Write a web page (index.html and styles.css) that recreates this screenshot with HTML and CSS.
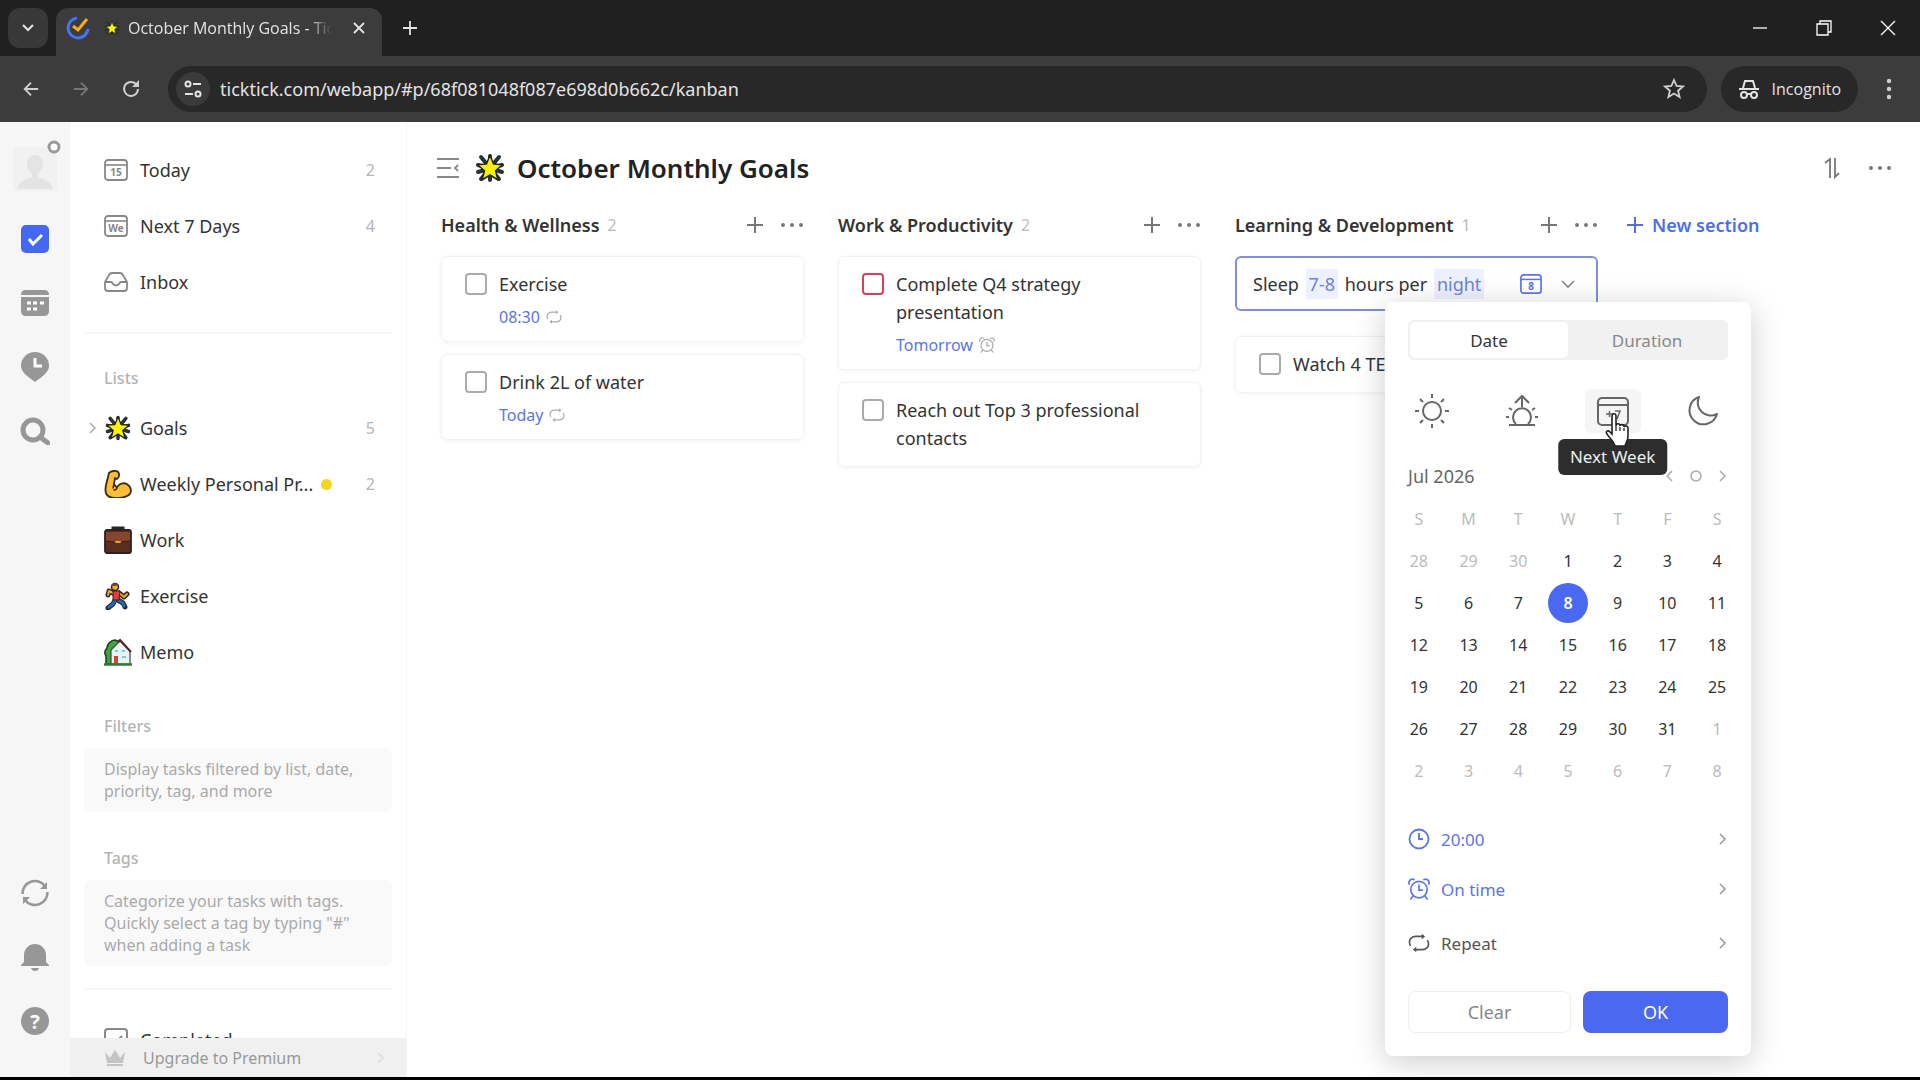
FILE: index.html
```html
<!DOCTYPE html>
<html lang="en">
<head>
    <meta charset="UTF-8">
    <meta name="viewport" content="width=device-width, initial-scale=1.0">
    <title>October Monthly Goals - TickTick</title>
    <link rel="stylesheet" href="styles.css">
</head>
<body>
    <!-- shared icons -->
    <svg class="sprite" aria-hidden="true">
        <symbol id="i-star" viewBox="0 0 32 32">
            <g stroke="#263238" stroke-width="4" stroke-linecap="round">
                <path d="M16 4v24M4 13l24 7M28 13L4 20M7 5l18 22M25 5L7 27"/>
            </g>
            <path d="M16 3l3.500 9 9 .8-7 6 2.500 9.200-8-5-8 5 2.500-9.200-7-6 9-.8z" fill="#fbf20c" stroke="#22261c" stroke-width="1.500" stroke-linejoin="round"/>
        </symbol>
        <symbol id="i-arm" viewBox="0 0 28 28">
            <path d="M5 3C7 1 12 0 14 2c2 2 1 6-1 7l-2-1-1 6c1 2 2 3 3 3 3-4 8-5 11-2 4 3 4 9-1 11-6 3-15 3-19 0-3-2-3-6-2-11C3 11 4 7 5 3z" fill="#fbbe38" stroke="#3b2c14" stroke-width="1.800" stroke-linejoin="round"/>
            <path d="M10 14l-1 4M13 17c0 2-1 3-3 3" fill="none" stroke="#3b2c14" stroke-width="1.500" stroke-linecap="round"/>
        </symbol>
        <symbol id="i-case" viewBox="0 0 28 28">
            <path d="M9 5V2h10v3" fill="none" stroke="#2b2226" stroke-width="3"/>
            <rect x="1" y="4" width="26" height="23" rx="2" fill="#5a2d20" stroke="#2b2226" stroke-width="1.800"/>
            <path d="M2 6h24v9l-12 1.500L2 15z" fill="#85462c"/>
            <path d="M2 15l12 1.500L26 15" fill="none" stroke="#3a1d16"/>
            <rect x="11" y="15" width="6" height="2" rx="1" fill="#e0a43a"/>
        </symbol>
        <symbol id="i-run" viewBox="0 0 28 28">
            <g fill="none" stroke-linecap="round" stroke-linejoin="round">
                <path d="M11 12L5 9 4 13M15 11l5 4 3-3M11 18l-2 4-5 4M14 18l5 3 2 4" stroke="#2d2722" stroke-width="5"/>
                <path d="M11 12L5 9 4 13M15 11l5 4 3-3" stroke="#f0a92e" stroke-width="2"/>
                <path d="M11 18l-2 4-4 3M14 18l5 3 1 3" stroke="#2368b5" stroke-width="3"/>
            </g>
            <path d="M9 9h7l-1 9H9z" fill="#e43d35" stroke="#2d2722"/>
            <circle cx="11" cy="5" r="3.500" fill="#f0a92e" stroke="#2d2722" stroke-width="1.500"/>
            <path d="M7 4c0-3 6-4 8-1l-5 1z" fill="#6a4322"/>
        </symbol>
        <symbol id="i-home" viewBox="0 0 28 28">
            <path d="M2 26V18c-2-3-1-6 1-8 0-4 4-8 8-8l5 2v22z" fill="#3da53c" stroke="#1c3a1f" stroke-width="1.500"/>
            <path d="M7 26V12l9-9 10 10v13z" fill="#e8f5f8" stroke="#444" stroke-width="1.200"/>
            <path d="M14 4l2-2 11 12" fill="none" stroke="#5c1e2a" stroke-width="2"/>
            <rect x="10" y="18" width="4" height="8" fill="#d5403a"/>
            <path d="M11 13h3M18 13h3M18 19h4" stroke="#79cbe4" stroke-width="2"/>
            <path d="M0 26.500h28" stroke="#2d7d32" stroke-width="2.500"/>
        </symbol>
        <symbol id="i-repeat" viewBox="0 0 20 20">
            <path d="M2 12C0 7 3 4 7 4h7M18 8c2 5-1 8-5 8H6" fill="none" stroke="currentColor" stroke-width="1.500" stroke-linecap="round"/>
            <path d="M12.500 1.500L15.500 4l-3 2.500zM7.500 13.500L4.500 16l3 2.500z" fill="currentColor"/>
        </symbol>
        <symbol id="i-alarm" viewBox="0 0 20 20">
            <g fill="none" stroke="currentColor" stroke-width="1.500" stroke-linecap="round">
                <circle cx="10" cy="10.500" r="7.500"/>
                <path d="M10 6.500V11h3M4.500 16.500L2.500 19M15.500 16.500l2 2.500M1 5.500C0 3 3 0 5.500 1.500M19 5.500C20 3 17 0 14.500 1.500"/>
            </g>
        </symbol>
        <symbol id="i-plus" viewBox="0 0 18 18">
            <path d="M9 1v16M1 9h16" stroke="currentColor" stroke-width="2" fill="none"/>
        </symbol>
        <symbol id="i-dots" viewBox="0 0 22 6">
            <g fill="currentColor"><circle cx="2" cy="3" r="2"/><circle cx="11" cy="3" r="2"/><circle cx="20" cy="3" r="2"/></g>
        </symbol>
        <symbol id="i-right" viewBox="0 0 10 14">
            <path d="M2 2l5 5-5 5" stroke="currentColor" stroke-width="1.500" fill="none"/>
        </symbol>
        <symbol id="i-cal" viewBox="0 0 24 24">
            <rect x="1" y="2" width="22" height="20" rx="3" fill="none" stroke="currentColor" stroke-width="1.800"/>
            <path d="M1 7h22" stroke="currentColor" stroke-width="1.600"/>
        </symbol>
    </svg>

    <header class="browser">
        <div class="tab_strip">
            <button class="tab_search" aria-label="Search tabs">
                <svg width="12" height="8" viewBox="0 0 12 8"><path d="M1 1l5 5 5-5" fill="none" stroke="#e3e3e3" stroke-width="2"/></svg>
            </button>
            <div class="tab">
                <svg class="favicon" width="24" height="24" viewBox="0 0 24 24">
                    <path d="M11 2A10 10 0 1 0 22 13" fill="none" stroke="#4772fa" stroke-width="3"/>
                    <path d="M7 10l5 4L21 3" fill="none" stroke="#f3ad27" stroke-width="3"/>
                </svg>
                <svg width="16" height="16"><use href="#i-star"/></svg>
                <span class="tab_title">October Monthly Goals - TickTick</span>
                <button class="tab_close" aria-label="Close tab">
                    <svg width="12" height="12" viewBox="0 0 12 12"><path d="M1 1l10 10M11 1L1 11" stroke="#e3e3e3" stroke-width="1.800"/></svg>
                </button>
            </div>
            <button class="tab_new" aria-label="New tab">
                <svg width="14" height="14" viewBox="0 0 14 14"><path d="M7 0v14M0 7h14" stroke="#e3e3e3" stroke-width="1.800"/></svg>
            </button>
            <div class="window_controls">
                <button aria-label="Minimize"><svg width="16" height="16" viewBox="0 0 16 16"><path d="M1 8h14" stroke="#fff" stroke-width="1.300"/></svg></button>
                <button aria-label="Restore"><svg width="16" height="16" viewBox="0 0 16 16"><path d="M1 4h11v11H1zM4 4V1h11v11h-3" stroke="#fff" stroke-width="1.300" fill="none"/></svg></button>
                <button aria-label="Close"><svg width="16" height="16" viewBox="0 0 16 16"><path d="M1 1l14 14M15 1L1 15" stroke="#fff" stroke-width="1.300"/></svg></button>
            </div>
        </div>
        <div class="toolbar">
            <nav class="nav_buttons">
                <button aria-label="Back"><svg width="18" height="18" viewBox="0 0 20 20"><path d="M18 10H3M10 3l-7 7 7 7" stroke="#d0d0d0" stroke-width="2" fill="none"/></svg></button>
                <button aria-label="Forward"><svg width="18" height="18" viewBox="0 0 20 20"><path d="M2 10h15M10 3l7 7-7 7" stroke="#777" stroke-width="2" fill="none"/></svg></button>
                <button aria-label="Reload"><svg width="20" height="20" viewBox="0 0 20 20"><path d="M17 10a7 7 0 1 1-2-5l2 2" stroke="#d0d0d0" stroke-width="2" fill="none"/><path d="M18 1v7h-7z" fill="#d0d0d0"/></svg></button>
            </nav>
            <div class="address">
                <button class="site_info" aria-label="Site information">
                    <svg width="18" height="18" viewBox="0 0 18 18" fill="none" stroke="#e3e3e3" stroke-width="2"><circle cx="4" cy="4" r="2.500"/><path d="M9 4h8M1 14h8"/><circle cx="14" cy="14" r="2.500"/></svg>
                </button>
                <input class="url" type="text" aria-label="Address" value="ticktick.com/webapp/#p/68f081048f087e698d0b662c/kanban">
                <button aria-label="Bookmark">
                    <svg width="22" height="22" viewBox="0 0 22 22"><path d="M11 2l2.600 6 6.400.5-4.900 4.200 1.500 6.300-5.600-3.400L5.400 19l1.500-6.300L2 8.500 8.400 8z" fill="none" stroke="#d0d0d0" stroke-width="1.800"/></svg>
                </button>
            </div>
            <div class="incognito">
                <svg width="22" height="20" viewBox="0 0 22 20" fill="none" stroke="#e3e3e3" stroke-width="2"><path d="M1 10h20M5 9l2-7h8l2 7"/><circle cx="6" cy="16" r="3"/><circle cx="16" cy="16" r="3"/><path d="M9 15h4"/></svg>
                <span>Incognito</span>
            </div>
            <button class="browser_menu" aria-label="Menu">
                <svg width="6" height="22" viewBox="0 0 6 22" fill="#d0d0d0"><circle cx="3" cy="3" r="2.200"/><circle cx="3" cy="11" r="2.200"/><circle cx="3" cy="19" r="2.200"/></svg>
            </button>
        </div>
    </header>

    <div class="app">
        <nav class="rail">
            <div class="avatar">
                <svg width="44" height="44" viewBox="0 0 44 44"><rect width="44" height="44" rx="4" fill="#f1f1f1"/><path d="M14 16a8 8 0 0 1 16 0c0 5-3 9-5 11v3c5 2 13 4 15 12H4c2-8 10-10 15-12v-3c-2-2-5-6-5-11z" fill="#e4e4e4"/></svg>
                <svg class="avatar_badge" width="14" height="14" viewBox="0 0 14 14"><circle cx="7" cy="7" r="5" fill="#fff" stroke="#999" stroke-width="3"/></svg>
            </div>
            <button aria-label="Tasks"><svg width="28" height="28" viewBox="0 0 28 28"><rect width="28" height="28" rx="5" fill="#4468f0"/><path d="M8 14l4 5 9-9" fill="none" stroke="#fff" stroke-width="3"/></svg></button>
            <button aria-label="Calendar"><svg width="28" height="28" viewBox="0 0 28 28"><path d="M0 6q0-5 5-5h18q5 0 5 5z" fill="#979797"/><path d="M0 8h28v14q0 5-5 5H5q-5 0-5-5z" fill="#979797"/><path d="M6 14h4M12 14h4M19 14h4M6 20h4M12 20h4" stroke="#fff" stroke-width="3"/></svg></button>
            <button aria-label="Focus"><svg width="28" height="30" viewBox="0 0 28 30"><path d="M14 0a14 14 0 0 1 14 14c0 6-7 11-14 16C7 25 0 20 0 14A14 14 0 0 1 14 0z" fill="#979797"/><path d="M14 6v8h7" fill="none" stroke="#fff" stroke-width="3"/></svg></button>
            <button aria-label="Search"><svg width="30" height="28" viewBox="0 0 30 28" fill="none" stroke="#979797"><circle cx="13" cy="13" r="10" stroke-width="5"/><path d="M20 20l8 6" stroke-width="5" stroke-linecap="round"/></svg></button>
            <div class="rail_gap"></div>
            <button aria-label="Sync"><svg width="28" height="28" viewBox="0 0 28 28"><path d="M1.500 15A12.500 12.500 0 0 1 24 7M26.500 13A12.500 12.500 0 0 1 4 21" fill="none" stroke="#979797" stroke-width="2.500"/><path d="M26 3v7h-7zM2 25v-7h7z" fill="#979797"/></svg></button>
            <button aria-label="Notifications"><svg width="28" height="28" viewBox="0 0 28 28" fill="#979797"><path d="M3 19V12a11 11 0 0 1 22 0v7l3 3v1H0v-1z"/><path d="M10 25h8c-1 4-7 4-8 0z"/></svg></button>
            <button class="help" aria-label="Help">?</button>
        </nav>

        <aside class="sidebar">
            <div class="side_scroll">
                <ul class="side_list">
                    <li><span class="side_icon"><svg width="24" height="24"><use href="#i-cal"/></svg><small>15</small></span><a href="#today">Today</a><b>2</b></li>
                    <li><span class="side_icon"><svg width="24" height="24"><use href="#i-cal"/></svg><small>We</small></span><a href="#week">Next 7 Days</a><b>4</b></li>
                    <li><span class="side_icon"><svg width="24" height="24" viewBox="0 0 24 24" fill="none" stroke="currentColor" stroke-width="1.800"><path d="M1 12l4-7q1-2 3-2h8q2 0 3 2l4 7v6q0 3-3 3H4q-3 0-3-3zM1 12h6q1 0 2 2 3 3 6 0 1-2 2-2h6"/></svg></span><a href="#inbox">Inbox</a></li>
                </ul>
                <hr>
                <h2>Lists</h2>
                <ul class="side_list">
                    <li><svg class="side_arrow" width="10" height="14"><use href="#i-right"/></svg><svg class="emoji" width="28" height="28"><use href="#i-star"/></svg><a href="#goals">Goals</a><b>5</b></li>
                    <li><svg class="emoji" width="28" height="28"><use href="#i-arm"/></svg><a href="#weekly">Weekly Personal Pr...</a><i class="dot"></i><b>2</b></li>
                    <li><svg class="emoji" width="28" height="28"><use href="#i-case"/></svg><a href="#work">Work</a></li>
                    <li><svg class="emoji" width="28" height="28"><use href="#i-run"/></svg><a href="#exercise">Exercise</a></li>
                    <li><svg class="emoji" width="28" height="28"><use href="#i-home"/></svg><a href="#memo">Memo</a></li>
                </ul>
                <h2 class="spaced">Filters</h2>
                <p class="hint">Display tasks filtered by list, date,<br>priority, tag, and more</p>
                <h2 class="spaced">Tags</h2>
                <p class="hint">Categorize your tasks with tags.<br>Quickly select a tag by typing "#"<br>when adding a task</p>
                <hr>
                <ul class="side_list">
                    <li><span class="side_icon"><svg width="24" height="24" viewBox="0 0 24 24" fill="none" stroke="currentColor" stroke-width="2"><rect x="1" y="1" width="22" height="22" rx="3"/><path d="M6 12l4 4 8-8"/></svg></span><a href="#completed">Completed</a></li>
                </ul>
            </div>
            <button class="upgrade">
                <svg width="22" height="18" viewBox="0 0 22 18"><path d="M1 3l5 6 5-8 5 8 5-6-2 11H3zM3 15h16v2H3z" fill="#c4c4c4"/></svg>
                <span>Upgrade to Premium</span>
                <svg class="upgrade_arrow" width="10" height="14"><use href="#i-right"/></svg>
            </button>
        </aside>

        <main class="board">
            <div class="board_head">
                <button aria-label="Hide sidebar"><svg width="22" height="22" viewBox="0 0 22 22" fill="none" stroke="#888" stroke-width="1.800"><path d="M0 2h22M0 11h14M0 20h22M21 8l-3 3 3 3"/></svg></button>
                <svg width="32" height="32"><use href="#i-star"/></svg>
                <h1>October Monthly Goals</h1>
                <button class="sort" aria-label="Sort"><svg width="16" height="22" viewBox="0 0 16 22" fill="none" stroke="#777" stroke-width="1.800"><path d="M1 6l5-4v19M15 16l-4 4V1"/></svg></button>
                <button aria-label="More"><svg width="22" height="6"><use href="#i-dots"/></svg></button>
            </div>
            <div class="columns">
                <section class="column">
                    <div class="column_head">
                        <h3>Health &amp; Wellness</h3><span>2</span>
                        <button aria-label="Add task"><svg width="18" height="18"><use href="#i-plus"/></svg></button>
                        <button aria-label="Section menu"><svg width="22" height="6"><use href="#i-dots"/></svg></button>
                    </div>
                    <article class="card">
                        <input type="checkbox" id="t1">
                        <div><label for="t1">Exercise</label><p>08:30 <svg width="16" height="16"><use href="#i-repeat"/></svg></p></div>
                    </article>
                    <article class="card">
                        <input type="checkbox" id="t2">
                        <div><label for="t2">Drink 2L of water</label><p>Today <svg width="16" height="16"><use href="#i-repeat"/></svg></p></div>
                    </article>
                </section>
                <section class="column">
                    <div class="column_head">
                        <h3>Work &amp; Productivity</h3><span>2</span>
                        <button aria-label="Add task"><svg width="18" height="18"><use href="#i-plus"/></svg></button>
                        <button aria-label="Section menu"><svg width="22" height="6"><use href="#i-dots"/></svg></button>
                    </div>
                    <article class="card">
                        <input type="checkbox" id="t3" class="high">
                        <div><label for="t3">Complete Q4 strategy<br>presentation</label><p>Tomorrow <svg width="16" height="16"><use href="#i-alarm"/></svg></p></div>
                    </article>
                    <article class="card">
                        <input type="checkbox" id="t4">
                        <div><label for="t4">Reach out Top 3 professional<br>contacts</label></div>
                    </article>
                </section>
                <section class="column">
                    <div class="column_head">
                        <h3>Learning &amp; Development</h3><span>1</span>
                        <button aria-label="Add task"><svg width="18" height="18"><use href="#i-plus"/></svg></button>
                        <button aria-label="Section menu"><svg width="22" height="6"><use href="#i-dots"/></svg></button>
                    </div>
                    <div class="new_task">
                        <div class="new_task_text" role="textbox" aria-label="New task" contenteditable="true" spellcheck="false">Sleep <mark>7-8</mark> hours per <mark>night</mark></div>
                        <button class="new_task_date" aria-label="Set date"><svg width="22" height="22"><use href="#i-cal"/></svg><small>8</small></button>
                        <button aria-label="More options"><svg width="16" height="10" viewBox="0 0 16 10"><path d="M2 2l6 6 6-6" fill="none" stroke="#888" stroke-width="1.600"/></svg></button>

                        <div class="picker">
                            <div class="picker_tabs">
                                <button class="active">Date</button>
                                <button>Duration</button>
                            </div>
                            <div class="quick">
                                <button aria-label="Today"><svg width="34" height="34" viewBox="0 0 34 34" fill="none" stroke="currentColor" stroke-width="2"><circle cx="17" cy="17" r="9"/><path d="M17 0v4M17 30v4M0 17h4M30 17h4M5 5l3 3M26 26l3 3M5 29l3-3M26 8l3-3"/></svg></button>
                                <button aria-label="Tomorrow"><svg width="34" height="34" viewBox="0 0 34 34" fill="none" stroke="currentColor" stroke-width="2"><path d="M4 31h26M17 13V3M10 9l7-7 7 7M1 23h3M30 23h3M4 14l3 2M30 14l-3 2"/><path d="M11 30a9 9 0 1 1 12 0"/></svg></button>
                                <button class="hover" aria-label="Next Week">
                                    <svg width="34" height="34" viewBox="0 0 34 34" fill="none" stroke="currentColor" stroke-width="2"><rect x="2" y="4" width="30" height="27" rx="4"/><path d="M2 11h30"/><path d="M10 20h7M13.500 17v6M19 17h5l-3 8" stroke-width="1.500"/></svg>
                                    <span class="tooltip">Next Week</span>
                                    <svg class="cursor" width="26" height="34" viewBox="0 0 26 34"><path d="M7 3c0-3 4-3 4 0v10c0-3 4-3 4 0 0-2 4-2 4 1 1-2 4-1 4 1v8c0 5-2 6-3 10H10c-1-5-6-8-8-12-2-3 1-4 3-2l2 2z" fill="#fff" stroke="#222" stroke-width="1.600"/><path d="M11 13v5M15 14v4M19 15v3" stroke="#222" stroke-width="1.300"/></svg>
                                </button>
                                <button aria-label="Tonight"><svg width="34" height="34" viewBox="0 0 34 34" fill="none" stroke="currentColor" stroke-width="2" stroke-linejoin="round"><path d="M13 3A14 14 0 1 0 31 20 13 13 0 0 1 13 3z"/></svg></button>
                            </div>
                            <div class="month">
                                <strong>Jul 2026</strong>
                                <button aria-label="Previous month"><svg class="flip" width="10" height="14"><use href="#i-right"/></svg></button>
                                <button aria-label="Current month"><svg width="14" height="14" viewBox="0 0 14 14"><circle cx="7" cy="7" r="5" fill="none" stroke="currentColor" stroke-width="1.500"/></svg></button>
                                <button aria-label="Next month"><svg width="10" height="14"><use href="#i-right"/></svg></button>
                            </div>
                            <table class="days">
                                <thead><tr><th>S</th><th>M</th><th>T</th><th>W</th><th>T</th><th>F</th><th>S</th></tr></thead>
                                <tbody id="days"></tbody>
                            </table>
                            <div class="options">
                                <button class="set"><svg width="22" height="22" viewBox="0 0 22 22" fill="none" stroke="currentColor" stroke-width="1.800"><circle cx="11" cy="11" r="9.500"/><path d="M11 5v6h4"/></svg><span>20:00</span><svg class="go" width="10" height="14"><use href="#i-right"/></svg></button>
                                <button class="set"><svg width="22" height="22"><use href="#i-alarm"/></svg><span>On time</span><svg class="go" width="10" height="14"><use href="#i-right"/></svg></button>
                                <button><svg width="22" height="22"><use href="#i-repeat"/></svg><span>Repeat</span><svg class="go" width="10" height="14"><use href="#i-right"/></svg></button>
                            </div>
                            <div class="picker_actions">
                                <button class="clear">Clear</button>
                                <button class="ok">OK</button>
                            </div>
                        </div>
                    </div>
                    <article class="card">
                        <input type="checkbox" id="t5">
                        <div><label for="t5">Watch 4 TED Talks</label></div>
                    </article>
                </section>
                <button class="new_section"><svg width="18" height="18"><use href="#i-plus"/></svg>New section</button>
            </div>
        </main>
    </div>

    <script>
        const corpo = document.getElementById("days")
        const selected = new Date(2026, 6, 8)
        const day = new Date(2026, 5, 28)

        for(let week = 0; week < 6; week++){
            const row = corpo.insertRow()
            for(let i = 0; i < 7; i++){
                const btn = document.createElement("button")
                btn.innerText = day.getDate()
                if(day.getMonth() !== 6){
                    btn.classList.add("other")
                }
                if(day.getTime() === selected.getTime()){
                    btn.classList.add("selected")
                }
                row.insertCell().appendChild(btn)
                day.setDate(day.getDate() + 1)
            }
        }
    </script>
</body>
</html>
```

FILE: styles.css
```css
*{
    margin: 0;
    padding: 0;
    box-sizing: border-box;
}
body{
    height: 100vh;
    display: flex;
    flex-direction: column;
    overflow: hidden;
    background-color: #000;
    color: #333;
    font-family: "Noto Sans", "Open Sans", sans-serif;
    font-size: 18px;
    border-bottom: 3px solid #000;
}
button, input{
    font: inherit;
    color: inherit;
    background: none;
    border: none;
}
button{
    display: flex;
    align-items: center;
    justify-content: center;
    flex-shrink: 0;
    cursor: pointer;
}
svg{
    flex-shrink: 0;
}
a{
    color: inherit;
    text-decoration: none;
}
ul{
    list-style: none;
}
.sprite{
    position: absolute;
    width: 0;
    height: 0;
}

/*browser*/
.tab_strip{
    height: 56px;
    padding: 8px 0 0 8px;
    display: flex;
    background-color: #202020;
}
.tab_search{
    width: 40px;
    height: 40px;
    border-radius: 12px;
    background-color: #383838;
}
.tab{
    width: 326px;
    margin-left: 8px;
    padding: 0 14px 8px 10px;
    display: flex;
    align-items: center;
    border-radius: 12px 12px 0 0;
    background-color: #3c3c3c;
    color: #e3e3e3;
    font-family: "Open Sans", sans-serif;
    font-size: 16px;
}
.favicon{
    margin-right: 14px;
}
.tab_title{
    flex: 1;
    margin: 0 18px 0 8px;
    overflow: hidden;
    white-space: nowrap;
    mask-image: linear-gradient(to right, #000 88%, transparent);
}
.tab_close{
    width: 18px;
    height: 18px;
}
.tab_new{
    width: 40px;
    height: 40px;
    margin-left: 8px;
}
.window_controls{
    margin-left: auto;
    display: flex;
}
.window_controls button{
    width: 64px;
    height: 40px;
}
.toolbar{
    height: 66px;
    padding: 10px 20px 10px 6px;
    display: flex;
    align-items: center;
    background-color: #3c3c3c;
    color: #e3e3e3;
}
.nav_buttons{
    display: flex;
    width: 162px;
}
.nav_buttons button{
    width: 50px;
    height: 46px;
}
.address{
    flex: 1;
    height: 46px;
    padding: 0 22px 0 8px;
    display: flex;
    align-items: center;
    border-radius: 23px;
    background-color: #282828;
}
.site_info{
    width: 34px;
    height: 34px;
    border-radius: 17px;
    background-color: #3a3a3a;
}
.url{
    flex: 1;
    margin-left: 10px;
    font-size: 18px;
}
.incognito{
    height: 46px;
    margin-left: 14px;
    padding: 0 17px;
    display: flex;
    align-items: center;
    gap: 12px;
    border-radius: 23px;
    background-color: #282828;
    font-family: "Open Sans", sans-serif;
    font-size: 16px;
}
.browser_menu{
    width: 22px;
    height: 46px;
    margin-left: 20px;
}

/*app*/
.app{
    flex: 1;
    min-height: 0;
    display: flex;
    background-color: #fff;
}
.rail{
    width: 70px;
    padding: 25px 0 24px;
    display: flex;
    flex-direction: column;
    align-items: center;
    flex-shrink: 0;
    background-color: #f6f6f6;
}
.avatar{
    position: relative;
    width: 44px;
    height: 44px;
    margin-bottom: 16px;
}
.avatar_badge{
    position: absolute;
    top: -7px;
    right: -4px;
}
.rail button{
    height: 64px;
}
.rail_gap{
    flex: 1;
}
.rail .help{
    width: 28px;
    height: 28px;
    margin: 18px 0;
    border-radius: 14px;
    background-color: #979797;
    color: #fff;
    font-size: 20px;
    font-weight: 700;
}
.sidebar{
    width: 337px;
    display: flex;
    flex-direction: column;
    flex-shrink: 0;
    border-right: 1px solid #f5f5f5;
}
.side_scroll{
    flex: 1;
    min-height: 0;
    overflow: hidden;
    padding: 20px 14px 0;
}
.side_list li{
    position: relative;
    height: 56px;
    padding: 0 17px 0 20px;
    display: flex;
    align-items: center;
}
.side_icon{
    position: relative;
    display: flex;
    margin-right: 12px;
    color: #888;
}
.side_icon small{
    position: absolute;
    top: 7px;
    left: 0;
    width: 24px;
    font-size: 10px;
    font-weight: 700;
    line-height: 14px;
    text-align: center;
}
.emoji{
    margin-right: 8px;
}
.side_arrow{
    position: absolute;
    left: 4px;
    color: #aaa;
}
.side_list b{
    margin-left: auto;
    color: #b5b5b5;
    font-size: 16px;
    font-weight: 400;
}
.dot{
    width: 11px;
    height: 11px;
    margin-left: 8px;
    border-radius: 50%;
    background-color: #f2d71e;
}
.sidebar hr{
    margin: 22px 0;
    border: none;
    border-top: 2px solid #f8f8f8;
}
.sidebar h2{
    padding-left: 20px;
    font-size: 16px;
    font-weight: 500;
    line-height: 44px;
    color: #b3b3b3;
}
.sidebar .spaced{
    margin-top: 24px;
}
.hint{
    padding: 10px 18px 10px 20px;
    border-radius: 6px;
    background-color: #f9f9f9;
    color: #aaa;
    font-size: 16px;
    line-height: 22px;
    white-space: nowrap;
}
.upgrade{
    height: 39px;
    padding: 0 20px 0 34px;
    justify-content: flex-start;
    background-color: #f0f0f0;
    color: #999;
    font-size: 16px;
}
.upgrade span{
    margin-left: 17px;
}
.upgrade_arrow{
    margin-left: auto;
    color: #ddd;
}

/*board*/
.board{
    flex: 1;
    min-width: 0;
    padding: 20px 29px 0 30px;
}
.board_head{
    height: 52px;
    display: flex;
    align-items: center;
    color: #777;
}
.board_head h1{
    margin-left: 11px;
    color: #222;
    font-size: 26px;
    font-weight: 600;
}
.board_head button + svg{
    margin-left: 15px;
}
.board_head .sort{
    margin: 0 29px 0 auto;
}
.columns{
    display: flex;
    gap: 34px;
    padding: 12px 0 0 4px;
}
.column{
    flex: 0 0 363px;
    display: flex;
    flex-direction: column;
    gap: 12px;
}
.column_head{
    height: 38px;
    display: flex;
    align-items: center;
    color: #777;
}
.column_head h3{
    color: #333;
    font-size: 18px;
    font-weight: 600;
}
.column_head span{
    margin: 0 auto 0 8px;
    color: #bbb;
    font-size: 16px;
}
.column_head button{
    margin-right: 1px;
}
.column_head button + button{
    margin-left: 16px;
}
.card{
    display: flex;
    padding: 13px 16px 14px 23px;
    border: 1px solid #f2f2f2;
    border-radius: 6px;
    box-shadow: 0 1px 4px rgba(0,0,0,0.05);
}
.card input{
    appearance: none;
    width: 22px;
    height: 22px;
    margin: 3px 12px 0 0;
    border: 2px solid #aaa;
    border-radius: 4px;
    flex-shrink: 0;
}
.card .high{
    border-color: #d5405b;
}
.card label{
    display: block;
    line-height: 28px;
}
.card p{
    margin-top: 9px;
    display: flex;
    align-items: center;
    gap: 6px;
    color: #5b75e6;
    font-size: 16px;
    line-height: 20px;
}
.card p svg{
    color: #aaa;
}
.new_section{
    height: 38px;
    margin-left: -6px;
    gap: 8px;
    color: #4f6fe3;
    font-weight: 600;
}
.new_task{
    position: relative;
    height: 55px;
    margin-bottom: 13px;
    padding: 0 20px 0 16px;
    display: flex;
    align-items: center;
    border: 2px solid #7d8fe0;
    border-radius: 6px;
}
.new_task_text{
    flex: 1;
    white-space: nowrap;
    outline: none;
}
.new_task mark{
    margin: 0 2px;
    padding: 3px;
    background-color: #edf1fd;
    color: #6b82de;
}
.new_task_date{
    position: relative;
    margin-right: 18px;
    color: #5b75e6;
}
.new_task_date small{
    position: absolute;
    top: 7px;
    left: 0;
    width: 22px;
    font-size: 10px;
    font-weight: 700;
    line-height: 13px;
}

/*date picker*/
.picker{
    position: absolute;
    top: 44px;
    left: 148px;
    width: 366px;
    padding: 18px 23px 23px;
    border-radius: 8px;
    background-color: #fff;
    box-shadow: 0 6px 32px rgba(0,0,0,0.2);
    z-index: 1;
}
.picker_tabs{
    height: 40px;
    padding: 2px;
    display: flex;
    border-radius: 6px;
    background-color: #f1f1f1;
    font-size: 17px;
}
.picker_tabs button{
    flex: 1;
    border-radius: 5px;
    color: #888;
}
.picker_tabs .active{
    background-color: #fff;
    color: #333;
}
.quick{
    margin: 29px -3px 27px -4px;
    display: flex;
    justify-content: space-between;
    color: #666;
}
.quick button{
    position: relative;
    width: 56px;
    height: 44px;
}
.quick .hover{
    background-color: #f5f5f5;
    border-radius: 6px;
}
.tooltip{
    position: absolute;
    top: 50px;
    left: 50%;
    transform: translateX(-50%);
    padding: 0 12px;
    border-radius: 6px;
    background-color: #2d2d2d;
    color: #eee;
    font-size: 17px;
    line-height: 36px;
    white-space: nowrap;
}
.cursor{
    position: absolute;
    top: 24px;
    left: 20px;
}
.month{
    height: 32px;
    display: flex;
    align-items: center;
    color: #aaa;
}
.month strong{
    margin-right: auto;
    color: #666;
    font-size: 18px;
    font-weight: 400;
}
.month button{
    width: 14px;
    margin-left: 13px;
}
.month button:last-child{
    margin-right: -2px;
}
.flip{
    transform: scaleX(-1);
}
.days{
    width: calc(100% + 28px);
    margin: 6px -14px 22px;
    border-collapse: collapse;
    table-layout: fixed;
    font-size: 16px;
}
.days th{
    height: 42px;
    color: #bbb;
    font-weight: 400;
}
.days td{
    height: 42px;
}
.days button{
    width: 40px;
    height: 40px;
    margin: 0 auto;
    border-radius: 20px;
}
.days .other{
    color: #bbb;
}
.days .selected{
    background-color: #4a68f0;
    color: #fff;
    font-weight: 600;
}
.options button{
    width: 100%;
    height: 50px;
    gap: 11px;
    color: #555;
    font-size: 17px;
}
.options .set{
    color: #5b75e6;
}
.options .set + button:last-child{
    margin-top: 4px;
}
.options .go{
    margin-left: auto;
    color: #999;
}
.picker_actions{
    margin-top: 23px;
    display: flex;
    gap: 12px;
}
.picker_actions button{
    height: 42px;
    border-radius: 8px;
}
.picker_actions .clear{
    flex: 10;
    border: 1px solid #eee;
    color: #888;
}
.picker_actions .ok{
    flex: 9;
    background-color: #4a68f0;
    color: #fff;
}
```
